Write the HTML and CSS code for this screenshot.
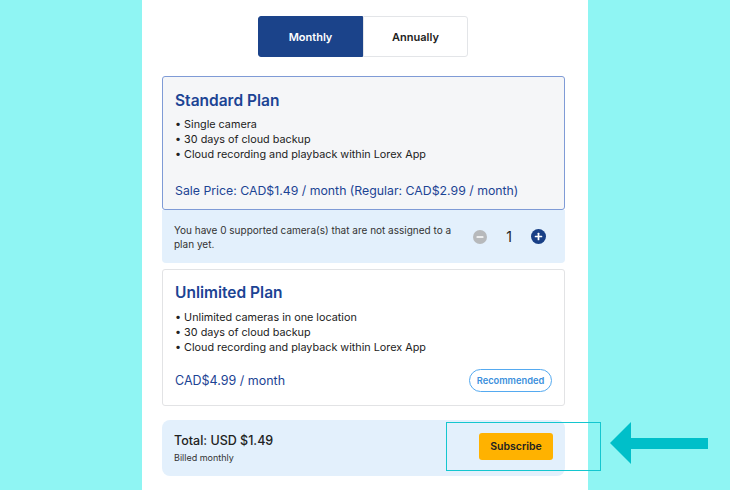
FILE: index.html
```html
<!DOCTYPE html>
<html>
<head>
<meta charset="utf-8">
<link rel="stylesheet" href="styles.css">
</head>
<body>
<div class="stage">
  <main class="panel">
    <div class="toggle">
      <button class="seg active">Monthly</button>
      <button class="seg">Annually</button>
    </div>

    <section class="plan selected">
      <h2 class="plan-title">Standard Plan</h2>
      <ul class="features">
        <li>• Single camera</li>
        <li>• 30 days of cloud backup</li>
        <li>• Cloud recording and playback within Lorex App</li>
      </ul>
      <div class="price">Sale Price: CAD$1.49 / month (Regular: CAD$2.99 / month)</div>
    </section>
    <div class="cams">
      <p class="cams-text">You have 0 supported camera(s) that are not assigned to a plan yet.</p>
      <div class="stepper">
        <span class="step minus"><svg width="14" height="14" viewBox="0 0 14 14"><circle cx="7" cy="7" r="7" fill="#b7b9bb"/><rect x="3.5" y="6.2" width="7" height="1.6" rx="0.5" fill="#fff"/></svg></span>
        <span class="qty">1</span>
        <span class="step plus"><svg width="15" height="15" viewBox="0 0 14 14"><circle cx="7" cy="7" r="7" fill="#183f86"/><rect x="3.5" y="6.2" width="7" height="1.6" rx="0.5" fill="#fff"/><rect x="6.2" y="3.5" width="1.6" height="7" rx="0.5" fill="#fff"/></svg></span>
      </div>
    </div>

    <section class="plan">
      <h2 class="plan-title">Unlimited Plan</h2>
      <ul class="features">
        <li>• Unlimited cameras in one location</li>
        <li>• 30 days of cloud backup</li>
        <li>• Cloud recording and playback within Lorex App</li>
      </ul>
      <div class="price-row">
        <div class="price big">CAD$4.99 / month</div>
        <span class="badge">Recommended</span>
      </div>
    </section>

    <div class="total">
      <div>
        <div class="total-amt">Total: USD $1.49</div>
        <div class="billed">Billed monthly</div>
      </div>
      <button class="subscribe">Subscribe</button>
    </div>
  </main>
  <div class="highlight"></div>
  <svg class="arrow" width="100" height="44" viewBox="0 0 100 44"><polygon points="0,21 21,0 21,16 98,16 98,27 21,27 21,42" fill="#00bfc9"/></svg>
</div>
</body>
</html>
```
FILE: styles.css
```css
* { box-sizing: border-box; }
html, body { margin: 0; padding: 0; }
body {
  background: #8ff5f3;
  font-family: "Inter", "Noto Sans", sans-serif;
  color: #222;
}
.stage {
  position: relative;
  width: 730px;
  height: 490px;
  overflow: hidden;
}
.panel {
  margin-left: 142px;
  width: 446px;
  height: 490px;
  background: #fff;
  padding: 16px 23px 0 20px;
  display: flex;
  flex-direction: column;
}
.toggle {
  display: flex;
  margin-left: 96px;
  width: 210px;
  height: 41px;
  margin-bottom: 19px;
}
.seg {
  flex: 1;
  font-family: inherit;
  font-size: 11px;
  font-weight: 600;
  border: 1px solid #e3e5e8;
  background: #fff;
  color: #222;
  border-radius: 0 3px 3px 0;
  padding: 0;
}
.seg.active {
  background: #1b438a;
  border-color: #1b438a;
  color: #fff;
  border-radius: 3px 0 0 3px;
}
.plan {
  border: 1px solid #e2e3e5;
  border-radius: 3px;
  background: #fff;
  padding: 13px 12px 10px 12px;
}
.plan.selected {
  border: 1.5px solid #7f9bd6;
  background: #f5f6f8;
  height: 134px;
  padding-top: 14px;
}
.plan-title {
  margin: 0 0 6px 0;
  font-size: 15.5px;
  font-weight: 600;
  color: #1c4494;
  line-height: 20px;
}
.features {
  list-style: none;
  margin: 0;
  padding: 0;
  font-size: 10.8px;
  line-height: 15px;
  color: #222;
}
.price {
  margin-top: 21px;
  font-size: 12.3px;
  color: #1c4494;
}
.cams {
  background: #e3f0fc;
  height: 53px;
  margin-bottom: 6px;
  display: flex;
  align-items: center;
  padding: 0 19px 0 12px;
  border-radius: 0 0 4px 4px;
}
.cams-text {
  margin: 0;
  width: 284px;
  font-size: 10px;
  line-height: 14px;
  color: #333;
}
.stepper {
  margin-left: auto;
  display: flex;
  align-items: center;
}
.step { display: flex; }
.qty {
  font-size: 14px;
  color: #222;
  width: 44px;
  text-align: center;
}
.plan:not(.selected) { height: 137px; padding-top: 13px; }
.plan:not(.selected) .plan-title { margin-bottom: 7px; }
.price-row {
  display: flex;
  align-items: center;
  justify-content: space-between;
  margin-top: 14px;
}
.price-row .price { margin-top: 0; }
.price.big { font-size: 12.5px; }
.badge {
  border: 1px solid #55aaf0;
  border-radius: 12px;
  height: 23px;
  width: 83px;
  display: flex;
  align-items: center;
  justify-content: center;
  font-size: 9.3px;
  font-weight: 600;
  color: #3b8fdc;
}
.total {
  margin-top: 14px;
  background: #e3f0fc;
  border-radius: 8px;
  height: 56px;
  display: flex;
  align-items: center;
  justify-content: space-between;
  padding: 0 12px;
}
.total-amt {
  font-size: 12.5px;
  font-weight: 500;
  color: #222;
  line-height: 16px;
}
.billed {
  margin-top: 3px;
  font-size: 9px;
  color: #333;
}
.subscribe {
  background: #ffb200;
  border: none;
  border-radius: 3px;
  width: 74px;
  height: 27px;
  margin-bottom: 4px;
  font-family: inherit;
  font-size: 10.5px;
  font-weight: 600;
  color: #222;
  padding: 0;
}
.highlight {
  position: absolute;
  left: 446px;
  top: 422px;
  width: 155px;
  height: 49px;
  border: 1px solid #14c6cf;
}
.arrow {
  position: absolute;
  left: 610px;
  top: 422px;
}
```
